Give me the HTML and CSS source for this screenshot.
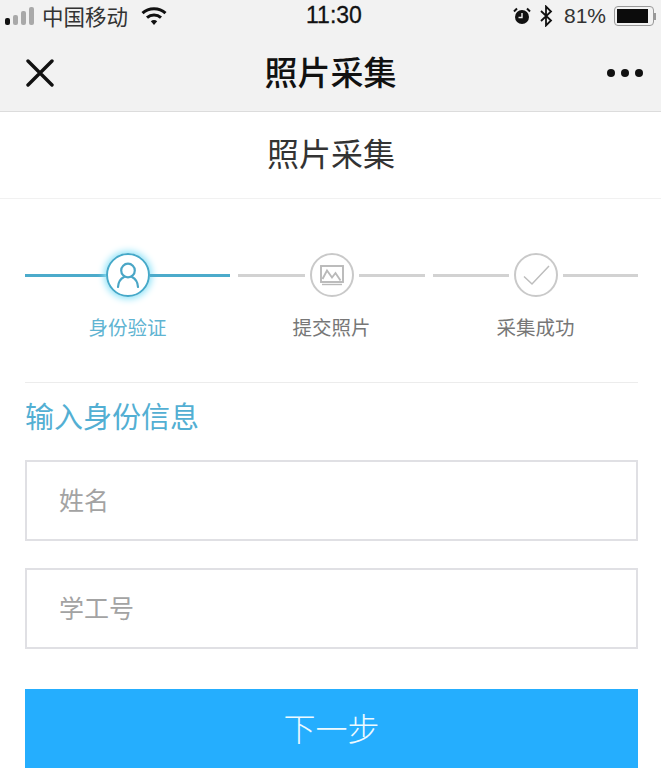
FILE: index.html
```html
<!DOCTYPE html>
<html lang="zh">
<head>
<meta charset="utf-8">
<title>照片采集</title>
<link rel="stylesheet" href="styles.css">
</head>
<body>
<div class="phone">
  <header class="chrome">
    <div class="status">
      <div class="status-left">
        <span class="signal"><i></i><i></i><i></i><i></i></span>
        <span class="carrier">中国移动</span>
        <svg class="wifi" width="26" height="20" viewBox="0 0 26 20"><path d="M1.500 7.200C7.800 1.300 18.200 1.300 24.500 7.200" fill="none" stroke="#111" stroke-width="3"/><path d="M6 11.600c4-3.600 10-3.600 14 0" fill="none" stroke="#111" stroke-width="3"/><path d="M9.800 15.200c1.900-1.500 4.500-1.500 6.400 0L13 19z" fill="#111"/></svg>
      </div>
      <div class="time">11:30</div>
      <div class="status-right">
        <svg class="alarm" width="18" height="18" viewBox="0 0 18 18"><circle cx="9" cy="10" r="7" fill="#111"/><path d="M9 6v4.500H5.500" fill="none" stroke="#eee" stroke-width="1.400"/><path d="M1 4.500 4 1.500M17 4.500 14 1.500" stroke="#111" stroke-width="2"/></svg>
        <svg class="bt" width="14" height="22" viewBox="0 0 14 22"><path d="M2 6l10 9.500L7 20.500V1.500l5 5L2 16" fill="none" stroke="#111" stroke-width="1.800"/></svg>
        <span class="pct">81%</span>
        <span class="battery"><span class="fill"></span></span><span class="nub"></span>
      </div>
    </div>
    <div class="nav">
      <svg class="close" width="28" height="28" viewBox="0 0 28 28"><path d="M2 2 26 26M26 2 2 26" stroke="#111" stroke-width="3.400" stroke-linecap="round"/></svg>
      <div class="nav-title">照片采集</div>
      <div class="dots"><i></i><i></i><i></i></div>
    </div>
  </header>
  <div class="page-title">照片采集</div>
  <main class="content">
    <div class="steps">
      <div class="step step-wide active">
        <div class="track">
          <span class="line"></span>
          <span class="node">
            <svg width="24" height="26" viewBox="0 0 24 26" fill="none" stroke="#4aa6c6" stroke-width="2.200"><circle cx="12" cy="8.500" r="6.800"/><path d="M2 25c.3-4.500 3-8.500 6-10M22 25c-.3-4.500-3-8.500-6-10" stroke-linecap="round"/></svg>
          </span>
          <span class="line"></span>
        </div>
        <div class="label">身份验证</div>
      </div>
      <div class="step step-mid">
        <div class="track">
          <span class="line"></span>
          <span class="node">
            <svg width="26" height="22" viewBox="0 0 26 22" fill="none" stroke="#b9b9b9" stroke-width="1.900"><rect x="2" y="2" width="22" height="16"/><path d="M3.500 15 8 6.500l5 7 3.500-4.500 5 7.500"/><path d="M3 20.500h20" stroke-width="1.400"/></svg>
          </span>
          <span class="line"></span>
        </div>
        <div class="label">提交照片</div>
      </div>
      <div class="step step-wide">
        <div class="track">
          <span class="line"></span>
          <span class="node">
            <svg width="30" height="24" viewBox="0 0 30 24" fill="none" stroke="#bdbdbd" stroke-width="1.500"><path d="M3 13.500l8 7.500L28 3"/></svg>
          </span>
          <span class="line"></span>
        </div>
        <div class="label">采集成功</div>
      </div>
    </div>
    <h2 class="section">输入身份信息</h2>
    <div class="field">姓名</div>
    <div class="field">学工号</div>
    <div class="submit">下一步</div>
  </main>
</div>
</body>
</html>
```

FILE: styles.css
```css
* { box-sizing: border-box; }
html, body { margin: 0; padding: 0; background: #fff; }
body { font-family: "Noto Sans CJK SC", "Liberation Sans", sans-serif; }
.phone { width: 661px; height: 768px; overflow: hidden; background: #fff; }
.chrome { height: 112px; background: #f2f2f2; border-bottom: 1px solid #dcdcdc; }
.status { height: 32px; display: flex; align-items: center; justify-content: space-between; position: relative; padding: 0 5px 0 5px; }
.status-left, .status-right { display: flex; align-items: center; }
.signal { display: flex; align-items: flex-end; gap: 3px; height: 18px; margin-right: 8px; }
.signal i { display: block; width: 5px; background: #a9a9a9; border-radius: 2px; }
.signal i:nth-child(1) { height: 7px; background: #111; }
.signal i:nth-child(2) { height: 10px; }
.signal i:nth-child(3) { height: 14px; }
.signal i:nth-child(4) { height: 18px; }
.carrier { font-size: 21.500px; line-height: 28px; color: #333; }
.wifi { margin-left: 13px; }
.time { position: absolute; left: 306px; top: 0; font-family: "Liberation Sans", sans-serif; font-size: 23px; line-height: 31px; color: #111; -webkit-text-stroke: 0.3px #111; }
.alarm { margin-right: 8px; }
.bt { margin-right: 11px; }
.pct { font-family: "Liberation Sans", sans-serif; font-size: 21px; color: #333; margin-right: 8px; }
.battery { width: 40px; height: 20px; border: 1.500px solid #999; border-radius: 4px; padding: 2px; display: block; }
.fill { display: block; width: 90%; height: 100%; background: #0c0c0c; }
.nub { width: 2px; height: 7px; background: #999; }
.nav { height: 79px; display: flex; align-items: center; position: relative; padding: 2px 0 0 26px; }
.close { display: block; }
.nav-title { position: absolute; left: 0; right: 0; top: 0; text-align: center; font-size: 33px; line-height: 79px; font-weight: 500; color: #111; }
.dots { position: absolute; right: 18px; top: 37px; display: flex; gap: 6px; }
.dots i { width: 8px; height: 8px; background: #111; border-radius: 50%; }
.page-title { height: 87px; padding-left: 1px; border-bottom: 1px solid #f1f1f1; text-align: center; font-size: 32px; line-height: 80px; color: #333; }
.content { padding: 53px 23px 0 25px; }
.steps { display: flex; height: 131px; gap: 8px; border-bottom: 1px solid #ececec; }
.step-wide { width: 205px; }
.step-mid { width: 187px; }
.track { display: flex; align-items: center; height: 46px; }
.line { flex: 1; height: 3px; background: #d2d2d2; }
.node { flex: none; width: 44px; height: 44px; margin: 0 5px; border-radius: 50%; border: 2px solid #c9c9c9; display: flex; align-items: center; justify-content: center; }
.active .line { background: #4cabcb; }
.active .node { margin: 0; border-color: #45a9c9; box-shadow: 0 0 7px 2px #8fe3f8; }
.label { margin-top: 15px; text-align: center; font-size: 19.500px; line-height: 28px; color: #777; }
.active .label { color: #5fb4d2; }
.section { margin: 11px 0 0; font-size: 29px; line-height: 42px; font-weight: 400; color: #53afd3; }
.field { height: 81px; margin-top: 24px; border: 2px solid #e0e0e4; padding-left: 32px; font-size: 25px; line-height: 74px; color: #a3a3a3; }
.field + .field { margin-top: 27px; }
.submit { height: 90px; margin-top: 40px; background: #25aefe; color: #eefaff; text-align: center; font-size: 32px; line-height: 76px; font-weight: 300; }
```
